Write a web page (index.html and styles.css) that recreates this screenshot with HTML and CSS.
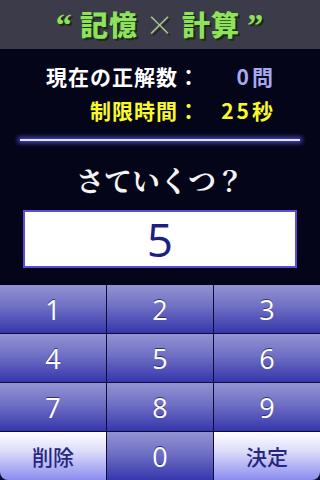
FILE: index.html
```html
<!DOCTYPE html>
<html lang="ja">
<head>
<meta charset="utf-8">
<link rel="stylesheet" href="styles.css">
</head>
<body>
<div class="screen">
  <header class="header">
    <h1 class="title"><span class="q">“</span> 記憶 <span class="x">×</span> 計算 <span class="q">”</span></h1>
  </header>
  <section class="info">
    <div class="label white">現在の正解数：</div>
    <div class="value lavender">0問</div>
    <div class="label yellow">制限時間：</div>
    <div class="value yellow">25秒</div>
  </section>
  <div class="rule"></div>
  <div class="question">さていくつ？</div>
  <div class="answer">5</div>
  <div class="keypad">
    <div class="key">1</div>
    <div class="key">2</div>
    <div class="key">3</div>
    <div class="key">4</div>
    <div class="key">5</div>
    <div class="key">6</div>
    <div class="key">7</div>
    <div class="key">8</div>
    <div class="key">9</div>
    <div class="key special left">削除</div>
    <div class="key">0</div>
    <div class="key special right">決定</div>
  </div>
</div>
</body>
</html>
```
FILE: styles.css
```css
html, body {
  margin: 0;
  padding: 0;
  background: #05051a;
}
.screen {
  width: 320px;
  height: 480px;
  overflow: hidden;
  display: flex;
  flex-direction: column;
  background: #05051a;
  font-family: "Noto Sans CJK JP", "Noto Sans", sans-serif;
}
.header {
  height: 49px;
  background: #3b3b49;
  display: flex;
  align-items: center;
  justify-content: center;
  flex-shrink: 0;
}
.title {
  margin: 0;
  font-size: 28px;
  font-weight: 900;
  color: #8ee25c;
  text-shadow: 2px 2px 0 #1d2a14;
  letter-spacing: 1px;
  line-height: 1;
  white-space: pre;
}
.title .x {
  font-weight: 300;
  color: #b0c8a0;
}
.title .q {
  font-family: "Liberation Serif", serif;
  font-size: 32px;
  font-weight: 700;
}
.info {
  display: grid;
  grid-template-columns: 200px 73px;
  grid-auto-rows: 34px;
  align-items: center;
  padding-top: 10px;
  font-size: 21px;
  font-weight: 700;
}
.label {
  text-align: right;
  letter-spacing: 1px;
}
.value {
  text-align: right;
  letter-spacing: 3px;
  margin-right: -3px;
}
.white { color: #ffffff; }
.yellow { color: #fafa2a; }
.lavender { color: #a8a8f0; }
.rule {
  margin: 12px 20px 0;
  height: 2px;
  background: #e4e4ff;
  box-shadow: 0 0 4px 2px #4646c8;
}
.question {
  margin-top: 19px;
  height: 40px;
  line-height: 40px;
  text-align: center;
  color: #f4f4f4;
  font-family: "Noto Serif CJK JP", "Noto Sans CJK JP", serif;
  font-size: 28px;
  font-weight: 700;
  letter-spacing: 0;
}
.answer {
  margin: 10px 23px 0;
  height: 54px;
  border: 2px solid #5a4cd4;
  background: #ffffff;
  color: #1e1e86;
  font-family: "Open Sans", "Liberation Sans", sans-serif;
  font-size: 46px;
  line-height: 54px;
  text-align: center;
}
.keypad {
  margin-top: 17px;
  display: grid;
  grid-template-columns: 106px 106px 106px;
  grid-auto-rows: 48px;
  gap: 1px;
  background: #0c0c38;
}
.key {
  background: linear-gradient(to bottom, #9393d3 0%, #6f6fc4 45%, #3636ac 100%);
  color: #ffffff;
  font-family: "Open Sans", "Liberation Sans", sans-serif;
  font-size: 27px;
  display: flex;
  align-items: center;
  justify-content: center;
  text-shadow: 0 -1px 0 #303080;
}
.key.special {
  background: linear-gradient(to bottom, #ffffff 0%, #dcdcfa 40%, #8c8cf0 100%);
  color: #262680;
  font-family: "Noto Sans CJK JP", sans-serif;
  font-size: 21px;
  font-weight: 500;
  text-shadow: none;
}
.key.left { border-bottom-left-radius: 8px; }
.key.right { border-bottom-right-radius: 8px; }
```
